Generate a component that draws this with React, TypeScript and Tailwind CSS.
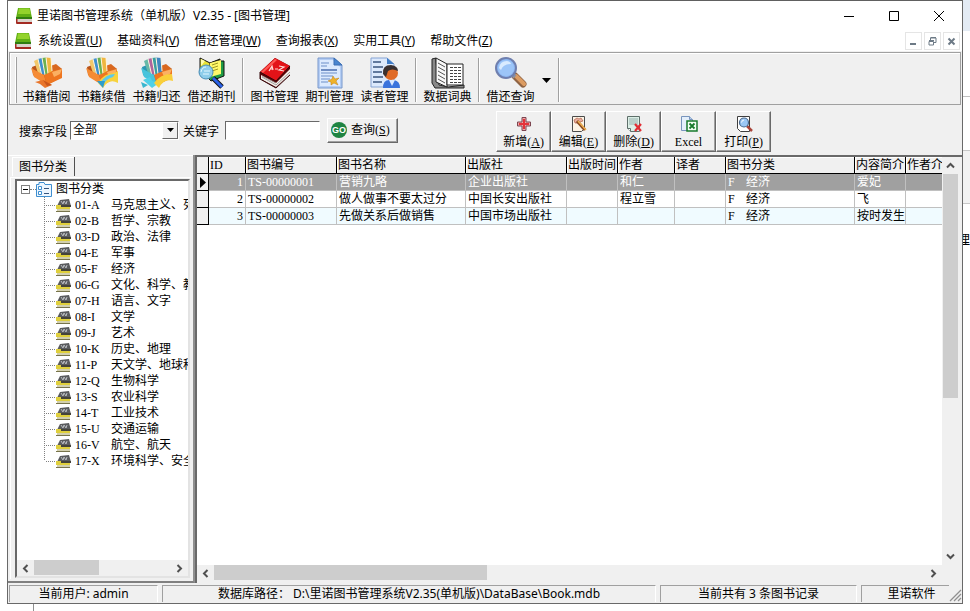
import type { ReactNode } from "react"

const categories = [
    ["01-A", "马克思主义、列宁主义"],
    ["02-B", "哲学、宗教"],
    ["03-D", "政治、法律"],
    ["04-E", "军事"],
    ["05-F", "经济"],
    ["06-G", "文化、科学、教育"],
    ["07-H", "语言、文字"],
    ["08-I", "文学"],
    ["09-J", "艺术"],
    ["10-K", "历史、地理"],
    ["11-P", "天文学、地球科学"],
    ["12-Q", "生物科学"],
    ["13-S", "农业科学"],
    ["14-T", "工业技术"],
    ["15-U", "交通运输"],
    ["16-V", "航空、航天"],
    ["17-X", "环境科学、安全科学"],
]

const columns = ["ID", "图书编号", "图书名称", "出版社", "出版时间", "作者", "译者", "图书分类", "内容简介", "作者介绍"]

const books = [
    ["1", "TS-00000001", "营销九略", "企业出版社", "", "和仁", "", "F", "爱妃", ""],
    ["2", "TS-00000002", "做人做事不要太过分", "中国长安出版社", "", "程立雪", "", "F", "飞", ""],
    ["3", "TS-00000003", "先做关系后做销售", "中国市场出版社", "", "", "", "F", "按时发生", ""],
]

const menus = [
    ["系统设置", "U"],
    ["基础资料", "V"],
    ["借还管理", "W"],
    ["查询报表", "X"],
    ["实用工具", "Y"],
    ["帮助文件", "Z"],
]

const AppLogo = () => (
    <svg width="16" height="16" viewBox="0 0 16 16" className="shrink-0">
        <path d="M2 0 H14 L16 10 H0 Z" fill="#5fae14" />
        <path d="M3 0.5 H13.5 L14.5 6 H2 Z" fill="#93d32c" />
        <path d="M0 9 H16 V11 H0 Z" fill="#2f7d12" />
        <path d="M1 11 H16 V14 H1 Z" fill="#d9d4cc" />
        <path d="M0 11 H1.5 V14 H16 V16 H1 Q0 16 0 15 Z" fill="#a32a22" />
    </svg>
)

const BoxBase = ({ teal }: { teal?: boolean }) => (
    <>
        <path d="M1 10 L6 8 L24 9 L31 12 L31 20 L16 28 L2 18 Z" fill={teal ? "#2b97b4" : "#b9541a"} />
        <path d="M17 10 L25 7 L31 12 L22 15 Z" fill="#d9681f" />
        <path d="M3 4 L7 2 L11 17 L7 16 Z" fill={teal ? "#67b9a8" : "#f2c86a"} />
        <path d="M7 2 L11 1 L14 18 L10 17 Z" fill={teal ? "#b0659c" : "#3f8fcf"} />
        <path d="M11 1 L15 0.5 L17 17 L14 18 Z" fill={teal ? "#3a9fa0" : "#6cb050"} />
        <path d="M15 0.5 L20 1 L21 15 L17 17 Z" fill={teal ? "#3f86c0" : "#f0b640"} />
        <path d="M7 2 L10.500 17 M11 1 L14 18 M15 0.500 L17 17 M20 1 L21 14" stroke="#fff6e0" strokeWidth="1" />
        <path d="M0 11 L13 18 L16 28 L3 20 Z" fill={teal ? "#48c4dc" : "#f58b34"} />
        <path d="M13 18 L22 14 L31 12 L31 21 L16 28 Z" fill="#ee7620" />
        <path d="M21 15 L31 12 L29 17 L23 20 Z" fill="#fbb062" />
    </>
)

const BorrowIcon = () => (
    <svg width="32" height="32" viewBox="0 0 32 32">
        <BoxBase />
        <path d="M4 25 L12 23 L21 28 L14 31 L9 27 Z" fill="#e8752a" />
        <path d="M12 23 L21 28 L16 29 Z" fill="#c9561a" />
    </svg>
)

const RenewIcon = () => (
    <svg width="32" height="32" viewBox="0 0 32 32">
        <BoxBase />
        <path d="M12 26 Q18 16 28 16 L32 14 V26 Q23 21 17 31 Z" fill="#f7d23c" />
        <path d="M15 25 Q20 17 29 17 L27 20 Q21 21 17 28 Z" fill="#5cc9ea" />
        <path d="M11 24 L19 24 L17 31 Z" fill="#2d9dcc" />
    </svg>
)

const ReturnIcon = () => (
    <svg width="32" height="32" viewBox="0 0 32 32">
        <BoxBase teal />
        <path d="M2 23 L9 20 L11 24 L18 26 L11 31 Z" fill="#4fd0e8" />
        <path d="M13 26 Q19 17 31 17 L32 24 Q23 21 18 31 Z" fill="#f9cf3a" />
        <path d="M0 25 L7 28 L2 31 Z" fill="#39b6cf" />
    </svg>
)

const JournalLoanIcon = () => (
    <svg width="32" height="32" viewBox="0 0 32 32">
        <path d="M4 1 L14 6 L24 2 V18 L14 22 L4 17 Z" fill="#e9e332" stroke="#111" />
        <path d="M14 6 L24 3 V17 L14 21 Z" fill="#fff86a" stroke="#111" />
        <path d="M24 4 L28 4 V19 L15 24 L13 22" fill="#1f9b45" stroke="#111" />
        <path d="M14 6 L25 3 V17 L14 20 Z" fill="#fff86a" />
        <path d="M5 2 V9 L9 4 Z" fill="#fffdb0" />
        <path d="M16 8 L22 6 M16 11 L22 9 M16 14 L22 12" stroke="#9e9922" />
        <path d="M17 21 L26 30" stroke="#111" strokeWidth="5" />
        <path d="M17 21 L26 30" stroke="#2a62e8" strokeWidth="3" />
        <circle cx="10" cy="15" r="7" fill="#8ecdea" stroke="#4a8fb8" />
        <path d="M5 15 Q6 10 10 10 M7 17 h6 M8 14 h6" stroke="#e2f7ff" fill="none" />
    </svg>
)

const DictionaryIcon = () => (
    <svg width="32" height="32" viewBox="0 0 32 32">
        <path d="M1 15 L16 1 L31 9 L31 17 L17 31 L1 22 Z" fill="#5a0508" />
        <path d="M1 15 L16 1 L31 9 L17 24 Z" fill="#e31318" />
        <path d="M2 15 L16 2 L18 3 L4 16 Z" fill="#ff5a55" />
        <path d="M2 18 L17 26 L31 12 V17 L17 30 L2 22 Z" fill="#f4f1ec" />
        <path d="M3 20 L17 28 L31 15 M3 19 L17 26" stroke="#8b8886" fill="none" strokeWidth="0.8" />
        <path d="M1 15 L17 24 L31 9 M1 15 V22 L17 31 L31 18" stroke="#35080a" fill="none" />
        <path d="M10 14 L13 9 L14 13 M11 12 h3 M16 12 h3 M20 9 L25 10 L20 13 L25 14" stroke="#ffd9d4" fill="none" strokeWidth="1.2" />
    </svg>
)

const JournalIcon = () => (
    <svg width="32" height="32" viewBox="0 0 32 32">
        <path d="M4 1 H20 L28 8 V31 H4 Z" fill="#b4cdf4" stroke="#7898cc" />
        <path d="M6 3 H19 L26 10 V29 H6 Z" fill="#dceafe" />
        <path d="M20 1 L28 8 H20 Z" fill="#4a86d0" stroke="#3c6fb4" />
        <path d="M7 6 h8 M7 9 h6 M7 16 h16 M7 19 h12 M7 22 h9 M7 25 h7" stroke="#6d8fc8" />
        <path d="M7 13 h16" stroke="#4a6cae" strokeWidth="1.5" />
        <path d="M19 19 L21 22 L25 21 L22 24 L24 28 L20 26 L17 28 L17 25 L14 24 L18 22 Z" fill="#efb329" stroke="#c07d10" strokeWidth="0.5" />
    </svg>
)

const ReaderIcon = () => (
    <svg width="32" height="32" viewBox="0 0 32 32">
        <path d="M2 1 H18 L25 7 V30 H2 Z" fill="#dce9fc" stroke="#86a4d4" />
        <path d="M18 1 L25 7 H18 Z" fill="#3e7cc8" />
        <path d="M4 5 h8 M4 10 h10 M4 15 h9 M4 20 h10 M4 25 h9" stroke="#38547e" strokeWidth="1.3" />
        <path d="M14 31 Q14 23 20 23 H25 Q31 24 31 31 Z" fill="#3a73dc" />
        <path d="M20 23 L23 29 L26 23 Z" fill="#dbe9ff" />
        <circle cx="22" cy="16" r="7" fill="#e06a26" />
        <path d="M14 17 Q13 8 22 8 Q29 9 29 14 Q23 11 19 14 L17 20 Z" fill="#3a3030" />
    </svg>
)

const OpenBookIcon = () => (
    <svg width="34" height="32" viewBox="0 0 34 32">
        <path d="M1 2 L5 1 V5 L8 28 L17 30 L33 28 V31 H4 L1 26 Z" fill="#898989" stroke="#222" />
        <path d="M5 1 L16 7 V30 L5 25 Z" fill="#f8f8f8" stroke="#222" />
        <path d="M16 7 H32 V28 H16 Z" fill="#ffffff" stroke="#222" />
        <path d="M7 6 L14 10 M7 10 L14 14 M7 14 L14 18 M7 18 L14 22 M7 22 L14 26" stroke="#555" />
        <path d="M19 10.500 h11 M19 13.500 h11 M19 16.500 h11 M19 19.500 h11 M19 22.500 h11 M19 25.500 h11" stroke="#444" strokeDasharray="3 1" />
    </svg>
)

const MagnifierIcon = () => (
    <svg width="34" height="32" viewBox="0 0 34 32">
        <path d="M21 19 L29 27" stroke="#8f6444" strokeWidth="7" strokeLinecap="round" />
        <path d="M22 19 L30 27" stroke="#dc9c62" strokeWidth="4" strokeLinecap="round" />
        <path d="M17 16 L21 20" stroke="#8b909e" strokeWidth="4" />
        <circle cx="12" cy="11" r="10" fill="#8bb6f2" stroke="#6f7fae" strokeWidth="2" />
        <circle cx="12" cy="11" r="8" fill="#9cc5f8" />
        <path d="M5 11 Q6 4 13 4 Q17 5 17 7 Q9 7 7 13 Z" fill="#d9ebff" />
    </svg>
)

const AddIcon = () => (
    <svg width="16" height="16" viewBox="0 0 16 16">
        <path d="M6 1.500 h4 v4.500 h4.500 v4 h-4.500 v4.500 h-4 v-4.500 h-4.500 v-4 h4.500 Z" fill="#f0a8a8" stroke="#7c4550" />
        <path d="M7 3 h2 v4 h4 v2 h-4 v4 h-2 v-4 h-4 v-2 h4 Z" fill="#e5343a" />
    </svg>
)

const EditIcon = () => (
    <svg width="18" height="16" viewBox="0 0 18 16">
        <path d="M2.500 0.500 h12 v12 l-3 3 h-9 Z" fill="#fdf4e6" stroke="#4b4b4b" />
        <path d="M4 4 l3 -2 l2 1 l2 -1 l2 3 l-3 1 l-3 1 l-2 0 Z" fill="#e8b0a0" stroke="#b0604a" strokeWidth="0.7" />
        <path d="M7 5 L15 14" stroke="#8a4a20" strokeWidth="3" />
        <path d="M8 5 L16 14" stroke="#f0b152" strokeWidth="1.5" />
    </svg>
)

const DeleteIcon = () => (
    <svg width="18" height="16" viewBox="0 0 18 16">
        <path d="M2.500 0.500 h12 v15 h-9 l-3 -3 Z" fill="#dcefe6" stroke="#5e6f6a" />
        <path d="M4 2 h9 v7 h-9 Z" fill="#b9cfc9" />
        <path d="M2.500 12.500 h3 v3" fill="#ffffff" stroke="#5e6f6a" />
        <path d="M10 8 L16 15 M16 8 L10 15" stroke="#e22d33" strokeWidth="2.200" />
    </svg>
)

const ExcelIcon = () => (
    <svg width="18" height="16" viewBox="0 0 18 16">
        <path d="M1.500 0.500 h8 l3 3 v11 h-11 Z" fill="#e4effb" stroke="#7895bd" />
        <path d="M9.500 0.500 v3 h3" fill="#b6cdea" stroke="#7895bd" />
        <path d="M7 5 h10 v10 h-10 Z" fill="#f3fff3" stroke="#187a2c" strokeWidth="1.500" />
        <path d="M9.500 7.500 L14.500 12.500 M14.500 7.500 L9.500 12.500" stroke="#187a2c" strokeWidth="1.800" />
    </svg>
)

const PrintIcon = () => (
    <svg width="18" height="16" viewBox="0 0 18 16">
        <path d="M2.500 0.500 h12 v15 h-9 l-3 -3 Z" fill="#ffffff" stroke="#3f3f3f" />
        <path d="M12 10 L17 15" stroke="#a9443a" strokeWidth="2.500" />
        <circle cx="9" cy="6.500" r="4.500" fill="#9bc8f5" stroke="#49688c" strokeWidth="1.200" />
        <path d="M6.500 6.500 Q7 4 9 4" stroke="#ffffff" fill="none" />
    </svg>
)

const CategoryIcon = () => (
    <svg width="15" height="13" viewBox="0 0 15 13" className="shrink-0">
        <path d="M4 1 L13 0 L15 7 H1 Z" fill="#5a5b5e" />
        <path d="M5 2 L7 5 L8 2 L10 5 L11 2" stroke="#b9bcc0" fill="none" />
        <path d="M0 6 H5 V8 H14 V10 H0 Z" fill="#dfcf3c" />
        <path d="M5 6 H15 V8 H5 Z" fill="#45433a" />
        <path d="M1 10 H14 V12 H1 Z" fill="#d2cfae" />
        <path d="M0 12 H14 V13 H0 Z" fill="#77734a" />
    </svg>
)

const RootIcon = () => (
    <svg width="16" height="15" viewBox="0 0 16 15" className="shrink-0">
        <path d="M0.5 2.5 H3 V0.5 H8 L9 2.5 H15.5 V14.5 H0.5 Z" fill="#edf6ff" stroke="#3f8fd0" />
        <path d="M2.500 4.500 h3 v3 h-3 Z M2.500 9.500 h3 v3 h-3 Z" fill="#ffffff" stroke="#3f8fd0" />
        <path d="M8 6.5 h5 M8 11.5 h5" stroke="#34547c" />
    </svg>
)

const Chevron = ({ d }: { d: string }) => (
    <svg width="9" height="9" viewBox="0 0 9 9">
        <path d={d} fill="none" stroke="#505050" strokeWidth="2" />
    </svg>
)

const left = "M6.5 1 L3 4.5 L6.5 8"
const right = "M2.5 1 L6 4.5 L2.5 8"
const up = "M1 6.5 L4.5 3 L8 6.5"
const down = "M1 2.5 L4.5 6 L8 2.5"

const HScroll = ({ thumb }: { thumb: string }) => (
    <div className="flex h-4 shrink-0 items-center bg-[#f0f0f0]">
        <button aria-label="向左" className="flex h-4 w-[17px] items-center justify-center"><Chevron d={left} /></button>
        <div className="flex h-4 flex-1">
            <div className={`h-[15px] bg-[#cdcdcd] ${thumb}`} />
        </div>
        <button aria-label="向右" className="flex h-4 w-[17px] items-center justify-center"><Chevron d={right} /></button>
    </div>
)

const ToolButton = ({ label, children }: { label: string; children: ReactNode }) => (
    <button className="flex w-[55px] flex-col items-center">
        <span className="flex h-8 items-center">{children}</span>
        <span className="leading-4">{label}</span>
    </button>
)

const ToolSeparator = () => <div className="mx-[3px] my-px w-[2px] border-r border-l border-r-white border-l-[#a0a0a0]" />

const ActionButton = ({ label, hotkey, children }: { label: string; hotkey?: string; children: ReactNode }) => (
    <button className="flex h-[41px] w-[55px] flex-col items-center border border-t-white border-r-[#696969] border-b-[#696969] border-l-white pt-[3px] shadow-[inset_-1px_-1px_#a0a0a0]">
        <span className="flex h-[18px] items-center">{children}</span>
        <span className="leading-[18px]">{label}{hotkey && <>(<u>{hotkey}</u>)</>}</span>
    </button>
)

const StatusPanel = ({ className, children }: { className: string; children: ReactNode }) => (
    <div className={`h-[17px] overflow-hidden border-t border-l border-[#a0a0a0] text-center leading-4 whitespace-nowrap ${className}`}>{children}</div>
)

const TitleBar = () => (
    <header className="flex h-[30px] shrink-0 items-center bg-white pl-2">
        <AppLogo />
        <h1 className="flex-1 pl-[5px]">里诺图书管理系统（单机版）V2.35 - [图书管理]</h1>
        <button aria-label="最小化" className="flex w-[45px] justify-center">
            <svg width="10" height="10"><path d="M0 5.5 H10" stroke="#000" /></svg>
        </button>
        <button aria-label="最大化" className="flex w-[45px] justify-center">
            <svg width="10" height="10"><path d="M0.5 0.5 H9.5 V9.5 H0.5 Z" fill="none" stroke="#000" /></svg>
        </button>
        <button aria-label="关闭" className="flex w-[46px] justify-center">
            <svg width="10" height="10"><path d="M0 0 L10 10 M10 0 L0 10" stroke="#000" /></svg>
        </button>
    </header>
)

const MenuBar = () => (
    <nav className="flex h-5 shrink-0 items-center bg-white pr-[2px] pl-[7px]">
        <AppLogo />
        <div className="flex flex-1 gap-[15px] pl-[7px]">
            {menus.map(([name, key]) => (
                <button key={key} className="whitespace-nowrap">{name}(<u>{key}</u>)</button>
            ))}
        </div>
        <div className="flex gap-[2px]">
            <button aria-label="最小化子窗口" className="flex h-[18px] w-[17px] items-center justify-center border border-[#e5e5e5]">
                <svg width="9" height="9"><path d="M1 7 H7" stroke="#6d7a86" strokeWidth="2" /></svg>
            </button>
            <button aria-label="还原子窗口" className="flex h-[18px] w-[17px] items-center justify-center border border-[#e5e5e5]">
                <svg width="9" height="9"><path d="M2.5 3 V1 H8 V5.5 H6 M1 4.5 H5.5 V8 H1 Z M1 3.5 H6 M2.5 0.5 H8" fill="none" stroke="#6d7a86" /></svg>
            </button>
            <button aria-label="关闭子窗口" className="flex h-[18px] w-[17px] items-center justify-center border border-[#e5e5e5]">
                <svg width="9" height="9"><path d="M1.5 1.5 L7.5 7.5 M7.5 1.5 L1.5 7.5" stroke="#6d7a86" strokeWidth="2" /></svg>
            </button>
        </div>
    </nav>
)

const ToolBar = () => (
    <div className="mx-px mt-px flex h-[53px] shrink-0 border border-[#a0a0a0] pt-1 pb-px pl-[5px] shadow-[inset_1px_1px_#fff]">
        <div className="mr-[2px] w-[2px] border-r border-l border-r-[#a0a0a0] border-l-white" />
        <ToolButton label="书籍借阅"><BorrowIcon /></ToolButton>
        <ToolButton label="书籍续借"><RenewIcon /></ToolButton>
        <ToolButton label="书籍归还"><ReturnIcon /></ToolButton>
        <ToolButton label="借还期刊"><JournalLoanIcon /></ToolButton>
        <ToolSeparator />
        <ToolButton label="图书管理"><DictionaryIcon /></ToolButton>
        <ToolButton label="期刊管理"><JournalIcon /></ToolButton>
        <ToolButton label="读者管理"><ReaderIcon /></ToolButton>
        <ToolSeparator />
        <ToolButton label="数据词典"><OpenBookIcon /></ToolButton>
        <ToolSeparator />
        <ToolButton label="借还查询"><MagnifierIcon /></ToolButton>
        <button aria-label="更多查询" className="flex w-[17px] items-center justify-center">
            <svg width="9" height="5"><path d="M0 0 H9 L4.5 5 Z" fill="#000" /></svg>
        </button>
        <ToolSeparator />
    </div>
)

const SearchBar = () => (
    <form className="flex h-[50px] shrink-0 items-center pl-[11px]">
        <label htmlFor="field" className="pt-1 pr-[3px]">搜索字段</label>
        <div className="relative w-[109px]">
            <select id="field" className="block h-[19px] w-full appearance-none border border-t-[#696969] border-r-white border-b-white border-l-[#696969] bg-white pl-[2px] leading-[15px]">
                <option>全部</option>
            </select>
            <span className="pointer-events-none absolute top-px right-px flex h-[17px] w-4 items-center justify-center border border-t-white border-r-[#696969] border-b-[#696969] border-l-white bg-[#f0f0f0]">
                <svg width="7" height="4"><path d="M0 0 H7 L3.5 4 Z" fill="#000" /></svg>
            </span>
        </div>
        <label htmlFor="keyword" className="pt-1 pr-[6px] pl-1">关键字</label>
        <input id="keyword" className="h-[19px] w-[95px] border border-t-[#696969] border-r-white border-b-white border-l-[#696969] bg-white px-1" />
        <button type="button" className="ml-[7px] flex h-[25px] w-[71px] items-center border border-t-white border-r-[#696969] border-b-[#696969] border-l-white pl-[3px] shadow-[inset_-1px_-1px_#a0a0a0]">
            <span className="flex size-4 items-center justify-center rounded-full bg-[#1e8442] font-['Liberation_Sans'] text-[9px] leading-none font-bold text-white">GO</span>
            <span className="pl-1">查询(<u>S</u>)</span>
        </button>
        <div className="ml-[98px] flex pt-[3px]">
            <ActionButton label="新增" hotkey="A"><AddIcon /></ActionButton>
            <ActionButton label="编辑" hotkey="E"><EditIcon /></ActionButton>
            <ActionButton label="删除" hotkey="D"><DeleteIcon /></ActionButton>
            <ActionButton label="Excel"><ExcelIcon /></ActionButton>
            <ActionButton label="打印" hotkey="P"><PrintIcon /></ActionButton>
        </div>
    </form>
)

const CategoryTree = () => (
    <aside className="flex w-[187px] shrink-0 flex-col border-r-2 border-b-2 border-r-[#909090] border-b-[#808080]">
        <div className="flex h-[22px] shrink-0 items-start border-t border-white pl-1">
            <button className="mt-px h-[19px] w-[63px] border-r border-[#505050] text-center shadow-[inset_1px_1px_#fff]">图书分类</button>
        </div>
        <div className="mr-[2px] mb-[2px] ml-[2px] flex min-h-0 flex-1 flex-col border-t border-l border-white pt-px pr-px pb-px pl-1">
            <div className="flex min-h-0 flex-1 flex-col border-2 border-t-[#696969] border-r-[#e3e3e3] border-b-[#e3e3e3] border-l-[#696969] bg-white">
                <div className="min-h-0 flex-1 overflow-hidden whitespace-nowrap">
                    <div className="flex h-4 items-center pl-1">
                        <button aria-label="折叠" className="flex size-[9px] items-center justify-center border border-[#808080]">
                            <svg width="5" height="1"><path d="M0 0.5 H5" stroke="#000" /></svg>
                        </button>
                        <span className="w-[6px] border-t border-dotted border-[#808080]" />
                        <RootIcon />
                        <span className="pl-1">图书分类</span>
                    </div>
                    <ul>
                        {categories.map(([code, name], i) => (
                            <li key={code} className="flex h-4 items-center pl-[27px]">
                                <svg width="12" height="16" className="shrink-0">
                                    <path d={i === categories.length - 1 ? "M0.5 0 V8" : "M0.5 0 V16"} stroke="#808080" strokeDasharray="1 1" />
                                    <path d="M2 8.5 H12" stroke="#808080" strokeDasharray="1 1" />
                                </svg>
                                <CategoryIcon />
                                <span className="w-10 shrink-0 pl-1">{code}</span>
                                <span>{name}</span>
                            </li>
                        ))}
                    </ul>
                </div>
                <HScroll thumb="w-[65px]" />
            </div>
        </div>
    </aside>
)

const BookGrid = () => (
    <section className="flex min-w-0 flex-1 flex-col border-t-2 border-l-2 border-t-[#696969] border-l-[#696969]">
        <div className="flex min-h-0 flex-1">
            <div className="min-w-0 flex-1 overflow-hidden bg-white">
                <table className="w-[760px] table-fixed border-separate border-spacing-0">
                    <colgroup>
                        <col className="w-[12px]" />
                        <col className="w-[37px]" />
                        <col className="w-[91px]" />
                        <col className="w-[129px]" />
                        <col className="w-[101px]" />
                        <col className="w-[51px]" />
                        <col className="w-[57px]" />
                        <col className="w-[51px]" />
                        <col className="w-[129px]" />
                        <col className="w-[51px]" />
                        <col className="w-[51px]" />
                    </colgroup>
                    <thead>
                        <tr className="h-[17px]">
                            <th className="border-r border-b border-black bg-[#f0f0f0] p-0" />
                            {columns.map((name) => (
                                <th key={name} className="overflow-hidden border-r border-b border-black bg-[#f0f0f0] py-0 pr-0 pl-[1px] text-left leading-4 font-normal whitespace-nowrap shadow-[inset_1px_1px_#fff]">{name}</th>
                            ))}
                        </tr>
                    </thead>
                    <tbody>
                        {books.map((book, row) => (
                            <tr key={book[0]} className={row === 0 ? "h-[17px] bg-[#a0a0a0] text-white" : row === 2 ? "h-[17px] bg-[#f0fbff]" : "h-[17px]"}>
                                <th className="border-r border-b border-black bg-[#f0f0f0] p-0 font-normal">
                                    {row === 0 && <svg width="6" height="11" className="mx-auto block"><path d="M0 0 L6 5.5 L0 11 Z" fill="#000" /></svg>}
                                </th>
                                {book.map((value, i) => (
                                    <td key={i} className={`overflow-hidden border-r border-b border-[#c0c0c0] px-[2px] py-0 leading-4 whitespace-nowrap ${i === 0 ? "text-right" : ""}`}>
                                        {i === 7 ? <><span className="inline-block w-[18px]">{value}</span>经济</> : value}
                                    </td>
                                ))}
                            </tr>
                        ))}
                    </tbody>
                </table>
            </div>
            <div className="mr-1 flex w-4 shrink-0 flex-col items-center bg-[#f0f0f0]">
                <button aria-label="向上" className="flex h-[17px] w-full items-center justify-center"><Chevron d={up} /></button>
                <div className="flex w-full flex-1 flex-col">
                    <div className="ml-px w-[15px] basis-[60%] bg-[#cdcdcd]" />
                </div>
                <button aria-label="向下" className="flex h-[17px] w-full items-center justify-center"><Chevron d={down} /></button>
            </div>
        </div>
        <div className="mr-5 mb-[2px]">
            <HScroll thumb="w-[273px]" />
        </div>
    </section>
)

export default function App() {
    return (
        <div className="flex h-screen flex-col overflow-hidden bg-white font-['Liberation_Serif','Noto_Sans_CJK_SC',serif] text-[12px] leading-4 text-black">
            <div className="flex min-h-0 flex-1 pl-[7px]">
                <div className="flex min-w-0 flex-1 flex-col border-r border-b border-l border-[#696969] bg-[#f0f0f0]">
                    <div className="h-px shrink-0 bg-[#606060]" />
                    <div className="font-['Noto_Sans','Noto_Sans_CJK_SC',sans-serif]">
                        <TitleBar />
                        <MenuBar />
                    </div>
                    <ToolBar />
                    <SearchBar />
                    <main className="flex min-h-0 flex-1 pb-px">
                        <CategoryTree />
                        <BookGrid />
                    </main>
                    <footer className="mt-px flex h-[18px] shrink-0 items-start gap-1 pl-px font-['Noto_Sans','Noto_Sans_CJK_SC',sans-serif]">
                        <StatusPanel className="w-[149px] border-r border-r-white">当前用户: admin</StatusPanel>
                        <StatusPanel className="flex-1 border-r border-r-white">数据库路径： D:\里诺图书管理系统V2.35(单机版)\DataBase\Book.mdb</StatusPanel>
                        <StatusPanel className="w-[197px] border-r border-r-white">当前共有 3 条图书记录</StatusPanel>
                        <div className="flex w-[101px] items-end">
                            <StatusPanel className="flex-1 pl-3">里诺软件</StatusPanel>
                            <svg width="13" height="13" className="shrink-0"><path d="M1 12 L12 1 M5 12 L12 5 M9 12 L12 9" stroke="#909090" strokeWidth="1.3" /></svg>
                        </div>
                    </footer>
                </div>
                <div className="flex w-[7px] shrink-0 flex-col overflow-hidden">
                    <div className="h-[31px] shrink-0 bg-[#e3ebf4]" />
                    <div className="h-[66px] shrink-0 border-b border-[#c0c0c0]" />
                    <div className="h-[53px] shrink-0" />
                    <div className="h-[54px] shrink-0 border-t border-b border-[#c8c8c8] bg-[#f2f2f2]" />
                    <div className="mt-7 flex h-4 justify-end text-[13px]"><span>理</span></div>
                </div>
            </div>
            <div className="ml-[33px] h-[7px] shrink-0 border-l border-[#909090]" />
        </div>
    )
}
